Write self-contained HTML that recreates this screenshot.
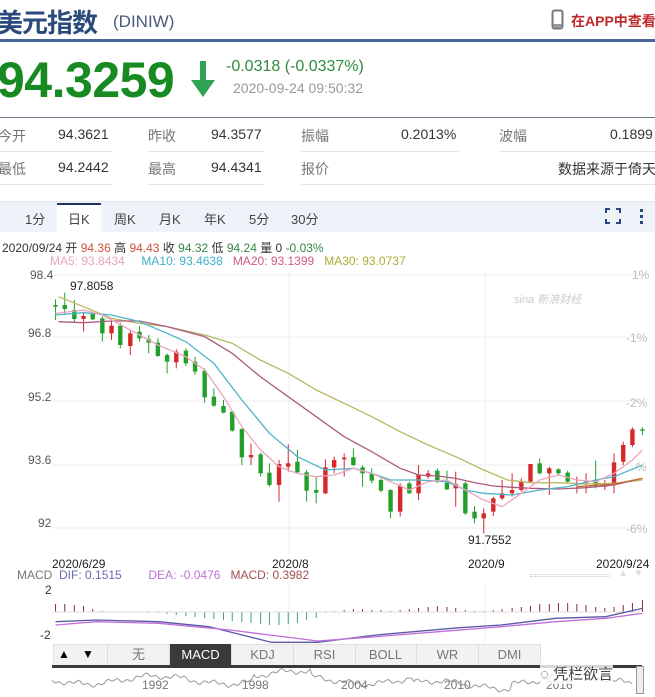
<!DOCTYPE html>
<html><head><meta charset="utf-8"><style>
*{margin:0;padding:0;box-sizing:border-box}
body{width:655px;height:697px;overflow:hidden;background:#fff;font-family:"Liberation Sans","Noto Sans CJK SC",sans-serif;position:relative;color:#333}
.a{position:absolute;white-space:nowrap}
.g{color:#777}
.ul{position:absolute;height:1px;background:#e4e4e4}
.bt{position:absolute;top:644px;width:62px;height:22px;border-right:1px solid #ddd;font-size:13px;color:#777;text-align:center;line-height:21px}
</style></head><body>
<div class="a" style="left:-3px;top:3px;font-size:26px;font-weight:bold;color:#2a4a7c;letter-spacing:-1px">美元指数</div>
<div class="a" style="left:113px;top:12px;font-size:17px;color:#4a5a78">(DINIW)</div>
<svg class="a" style="left:551px;top:9px" width="14" height="22"><rect x="1.5" y="1.5" width="10" height="18" rx="2" fill="none" stroke="#777" stroke-width="2"/><rect x="2" y="15" width="9" height="4" fill="#999"/></svg>
<div class="a" style="left:571px;top:11px;font-size:14px;font-weight:bold;color:#c0282a">在APP中查看</div>
<div class="a" style="left:0;top:39px;width:655px;height:3px;background:#46679a"></div>
<div class="a" style="left:-3px;top:51px;font-size:50px;font-weight:bold;color:#178a22;letter-spacing:-0.5px">94.3259</div>
<svg class="a" style="left:190px;top:60px" width="26" height="38"><rect x="10" y="1" width="6" height="24" fill="#2fa352"/><polygon points="1,20 25,20 13,37" fill="#2fa352"/></svg>
<div class="a" style="left:226px;top:58px;font-size:16px;color:#2f8a3e">-0.0318 (-0.0337%)</div>
<div class="a" style="left:233px;top:80px;font-size:14px;color:#999">2020-09-24 09:50:32</div>
<div class="a" style="left:0;top:117px;width:655px;height:1px;background:#6a7a88"></div>
<div class="a g" style="left:-2px;top:126px;font-size:14px">今开</div>
<div class="a" style="left:58px;top:126px;font-size:14px">94.3621</div>
<div class="a g" style="left:148px;top:126px;font-size:14px">昨收</div>
<div class="a" style="left:211px;top:126px;font-size:14px">94.3577</div>
<div class="a g" style="left:301px;top:126px;font-size:14px">振幅</div>
<div class="a" style="left:401px;top:126px;font-size:14px">0.2013%</div>
<div class="a g" style="left:499px;top:126px;font-size:14px">波幅</div>
<div class="a" style="left:610px;top:126px;font-size:14px">0.1899</div>
<div class="ul" style="left:0;top:151px;width:112px"></div><div class="ul" style="left:148px;top:151px;width:116px"></div><div class="ul" style="left:301px;top:151px;width:158px"></div><div class="ul" style="left:499px;top:151px;width:156px"></div>
<div class="a g" style="left:-2px;top:159px;font-size:14px">最低</div>
<div class="a" style="left:58px;top:159px;font-size:14px">94.2442</div>
<div class="a g" style="left:148px;top:159px;font-size:14px">最高</div>
<div class="a" style="left:211px;top:159px;font-size:14px">94.4341</div>
<div class="a g" style="left:301px;top:159px;font-size:14px">报价</div>
<div class="a" style="left:558px;top:159px;font-size:14px">数据来源于倚天</div>
<div class="ul" style="left:0;top:184px;width:112px"></div><div class="ul" style="left:148px;top:184px;width:116px"></div><div class="ul" style="left:301px;top:184px;width:354px"></div>
<div class="a" style="left:0;top:201px;width:655px;height:31px;background:#eef3fa;border-top:1px solid #e2e8f0"></div>
<div class="a" style="left:57px;top:203px;width:44px;height:29px;background:#fff;border-top:2px solid #1e3358"></div>
<div class="a" style="left:25px;top:209px;font-size:13px;color:#444">1分</div>
<div class="a" style="left:68px;top:209px;font-size:13px;color:#444">日K</div>
<div class="a" style="left:114px;top:209px;font-size:13px;color:#444">周K</div>
<div class="a" style="left:159px;top:209px;font-size:13px;color:#444">月K</div>
<div class="a" style="left:204px;top:209px;font-size:13px;color:#444">年K</div>
<div class="a" style="left:249px;top:209px;font-size:13px;color:#444">5分</div>
<div class="a" style="left:291px;top:209px;font-size:13px;color:#444">30分</div>
<svg class="a" style="left:605px;top:208px" width="45" height="16"><path d="M1 5V1h4M11 1h4v4M15 11v4h-4M5 15H1v-4" fill="none" stroke="#2a4a7c" stroke-width="2"/><rect x="35" y="1" width="3" height="3" fill="#2a4a7c"/><rect x="35" y="7" width="3" height="3" fill="#2a4a7c"/><rect x="35" y="13" width="3" height="3" fill="#2a4a7c"/></svg>
<div class="a" style="left:2px;top:239px;font-size:12px;color:#333">2020/09/24 开 <span style="color:#d0503a">94.36</span> 高 <span style="color:#d0503a">94.43</span> 收 <span style="color:#2f8a3e">94.32</span> 低 <span style="color:#2f8a3e">94.24</span> 量 0 <span style="color:#2f8a3e">-0.03%</span></div>
<div class="a" style="left:50px;top:254px;font-size:12px"><span style="color:#e8a4bd">MA5: 93.8434</span>&nbsp;&nbsp;&nbsp;&nbsp;&nbsp;<span style="color:#3bb0c8">MA10: 93.4638</span>&nbsp;&nbsp;&nbsp;<span style="color:#d05a88">MA20: 93.1399</span>&nbsp;&nbsp;&nbsp;<span style="color:#a8b030">MA30: 93.0737</span></div>
<svg id="ch" class="a" style="left:0;top:0" width="655" height="697"></svg>
<div class="a" style="left:30px;top:268px;font-size:12px;color:#555">98.4</div>
<div class="a" style="left:28px;top:326px;font-size:12px;color:#555">96.8</div>
<div class="a" style="left:28px;top:390px;font-size:12px;color:#555">95.2</div>
<div class="a" style="left:28px;top:453px;font-size:12px;color:#555">93.6</div>
<div class="a" style="left:38px;top:516px;font-size:12px;color:#555">92</div>
<div class="a" style="left:70px;top:279px;font-size:12px;color:#222">97.8058</div>
<div class="a" style="left:468px;top:533px;font-size:12px;color:#222">91.7552</div>
<div class="a" style="left:632px;top:268px;font-size:12px;color:#bbb">1%</div>
<div class="a" style="left:626px;top:331px;font-size:12px;color:#bbb">-1%</div>
<div class="a" style="left:626px;top:396px;font-size:12px;color:#bbb">-2%</div>
<div class="a" style="left:636px;top:460px;font-size:12px;color:#bbb">%</div>
<div class="a" style="left:626px;top:522px;font-size:12px;color:#bbb">-6%</div>
<div class="a" style="left:514px;top:291px;font-size:11px;color:#ccc;font-style:italic">sina 新浪财经</div>
<div class="a" style="left:52px;top:557px;font-size:12px;color:#222">2020/6/29</div>
<div class="a" style="left:272px;top:557px;font-size:12px;color:#222">2020/8</div>
<div class="a" style="left:468px;top:557px;font-size:12px;color:#222">2020/9</div>
<div class="a" style="left:596px;top:557px;font-size:12px;color:#222">2020/9/24</div>
<div class="a" style="left:17px;top:568px;font-size:12px"><span style="color:#777">MACD</span>&nbsp;&nbsp;<span style="color:#6a6ab0">DIF: 0.1515</span>&nbsp;&nbsp;&nbsp;&nbsp;&nbsp;&nbsp;&nbsp;&nbsp;<span style="color:#c070d0">DEA: -0.0476</span>&nbsp;&nbsp;&nbsp;<span style="color:#a05050">MACD: 0.3982</span></div>
<div class="a" style="left:530px;top:574px;width:80px;height:3px;border-top:1px dotted #ccc;border-bottom:1px dotted #ccc"></div>
<div class="a" style="left:618px;top:568px;font-size:10px;color:#ddd">▲&nbsp;&nbsp;▼</div>
<div class="a" style="left:45px;top:583px;font-size:12px;color:#333">2</div>
<div class="a" style="left:40px;top:628px;font-size:12px;color:#333">-2</div>
<div class="a" style="left:53px;top:644px;width:488px;height:22px;background:#f2f2f2;border:1px solid #e0e0e0"></div>
<div class="a" style="left:58px;top:647px;font-size:12px;color:#000">▲</div>
<div class="a" style="left:82px;top:647px;font-size:12px;color:#000">▼</div>
<div class="a" style="left:107px;top:644px;width:1px;height:22px;background:#ddd"></div>
<div class="bt" style="left:108px">无</div>
<div class="bt" style="left:170px;background:#3a3a3a;color:#fff">MACD</div>
<div class="bt" style="left:232px">KDJ</div>
<div class="bt" style="left:294px">RSI</div>
<div class="bt" style="left:355px">BOLL</div>
<div class="bt" style="left:417px">WR</div>
<div class="bt" style="left:479px">DMI</div>
<div class="a" style="left:52px;top:665px;width:590px;height:3px;background:#3a3a3a"></div>
<div class="a" style="left:142px;top:678px;font-size:12px;color:#777">1992</div>
<div class="a" style="left:242px;top:678px;font-size:12px;color:#777">1998</div>
<div class="a" style="left:341px;top:678px;font-size:12px;color:#777">2004</div>
<div class="a" style="left:444px;top:678px;font-size:12px;color:#777">2010</div>
<div class="a" style="left:546px;top:678px;font-size:12px;color:#777">2016</div>
<div class="a" style="left:540px;top:663px;font-size:15px;color:#444;background:rgba(255,255,255,.8)">◌ 凭栏欲言</div>
<div class="a" style="left:636px;top:666px;width:8px;height:28px;border:1px solid #999;background:#eee"></div>
<script>
var s=document.getElementById('ch'),h='';
function X(z){return z/2.394}function Y(z){return 260+z/3}
[275,337,401,465,528].forEach(function(y){h+='<line x1="52" x2="640" y1="'+y+'" y2="'+y+'" stroke="#eee"/>'});
[289,485].forEach(function(x){h+='<line x1="'+x+'" x2="'+x+'" y1="272" y2="555" stroke="#eee"/><line x1="'+x+'" x2="'+x+'" y1="585" y2="643" stroke="#eee"/>'});
var d="133 g 135 140 118 180|155 g 135 147 98 165|178 g 150 177 120 188|200 r 168 177 155 215|222 g 160 178 155 180|245 g 175 220 168 245|267 r 197 220 180 240|288 g 197 255 188 265|312 r 220 258 210 285|334 g 215 235 198 245|356 g 237 248 225 280|378 g 248 288 235 290|400 g 285 305 280 340|422 r 275 307 268 325|445 g 272 310 265 318|467 g 305 335 290 345|490 g 332 412 325 428|512 g 410 437 385 440|535 g 438 458 420 460|556 g 455 512 452 515|579 g 507 592 505 615|601 r 585 592 550 615|624 g 583 640 578 650|645 g 638 675 610 680|668 r 612 675 600 725|690 r 610 620 553 635|712 g 605 637 570 642|734 g 637 692 630 725|757 g 690 698 650 730|779 r 622 700 598 702|800 r 600 622 590 640|824 r 593 598 580 650|846 g 592 615 565 618|868 g 622 640 615 680|890 g 640 662 625 670|912 g 660 692 655 697|935 g 690 755 688 775|958 r 677 755 670 770|980 g 670 700 665 702|1002 r 645 700 615 720|1025 r 640 650 630 655|1047 g 632 665 625 670|1070 g 668 688 632 690|1091 r 672 685 635 740|1114 g 670 760 665 765|1136 g 755 775 738 790|1158 r 760 775 745 820|1181 r 715 755 710 768|1202 r 700 715 660 720|1226 r 690 700 640 710|1248 r 665 690 655 695|1270 r 612 665 612 668|1292 g 610 640 595 643|1315 r 625 640 620 705|1337 g 628 640 625 648|1359 g 638 665 632 670|1381 r 670 672 650 700|1403 r 665 668 640 700|1426 g 660 680 602 685|1448 r 672 680 660 690|1470 r 607 675 580 700|1492 r 555 605 545 615|1514 r 508 555 502 562|1538 g 508 512 502 525";
var xs=[];
d.split('|').forEach(function(r){var p=r.split(' '),x=X(+p[0]),c=p[1]=='g'?'#23a02c':'#d6282a';xs.push(x);
var t=Y(+p[2]),b=Y(+p[3]);if(b-t<1.2)b=t+1.2;
h+='<line x1="'+x+'" x2="'+x+'" y1="'+Y(+p[4])+'" y2="'+Y(+p[5])+'" stroke="'+c+'"/><rect x="'+(x-2.2)+'" y="'+t+'" width="4.4" height="'+(b-t)+'" fill="'+c+'"/>';});
function L(str,c,oy){var pts=str.split(' ').reduce(function(a,v,i,arr){if(i%2==0)a.push(X(+v)+','+(oy+ +arr[i+1]/3));return a},[]);h+='<polyline points="'+pts.join(' ')+'" fill="none" stroke="'+c+'" stroke-width="1.3"/>';}
L("140 110 200 140 267 175 334 190 400 200 490 225 556 250 623 300 690 340 757 390 824 430 890 470 958 515 1025 555 1091 590 1158 630 1215 660 1270 668 1337 668 1403 672 1470 670 1538 660","#b8b860",260);
L("140 185 200 188 267 183 334 183 400 200 490 230 556 280 623 350 690 410 757 470 824 530 890 575 958 625 1002 645 1047 648 1091 655 1136 668 1181 678 1226 682 1270 685 1337 687 1403 683 1470 675 1538 655","#b05a80",260);
L("133 165 200 158 267 165 334 185 400 220 445 245 512 310 579 420 645 520 712 590 779 630 846 625 890 640 935 660 1002 660 1070 665 1114 690 1158 700 1226 705 1292 690 1359 680 1426 660 1470 650 1538 615","#4bb5c8",260);
L("133 160 200 150 245 165 312 210 378 255 445 290 490 330 535 410 579 500 624 570 668 620 712 640 757 650 800 645 846 625 890 640 935 665 980 690 1025 665 1070 660 1114 690 1158 720 1202 740 1248 700 1292 660 1337 645 1381 660 1426 665 1470 640 1514 600 1538 570","#eaa6bf",260);
L("1381 680 1470 672 1538 655","#c07030",260);
var zero=612,hv=[8,8,7,6,3,1,0,0,0,0,-1,-1,-2,-3,-4,-5,-6,-7,-8,-9,-10,-11,-12,-13,-13,-12,-11,-8,-6,-1,1,2,3,3,2,2,1,2,3,4,5,6,5,4,2,1,1,2,3,4,5,6,8,8,9,9,8,7,5,4,5,7,9,12];
xs.forEach(function(x,i){var v=hv[i]||0;if(!v)return;h+='<line x1="'+x+'" x2="'+x+'" y1="'+zero+'" y2="'+(zero-v)+'" stroke="'+(v>0?'#8a2a2a':'#3aa07a')+'"/>';});
h+='<line x1="52" x2="640" y1="612" y2="612" stroke="#ddd"/>';
L("133 200 230 195 380 200 500 215 650 262 760 262 900 240 1100 218 1200 210 1330 190 1450 185 1538 160","#5a5aa8",555);
L("133 210 230 200 380 205 550 225 760 258 900 245 1050 230 1200 215 1330 200 1450 190 1538 175","#c070d8",555);
var m='';for(var i=0;i<=290;i++){var x=52+i*2;var y=680+Math.sin(i*0.09)*4+Math.sin(i*0.37)*2+Math.sin(i*1.3)*1.5+(i>100&&i<130?-5:0)+(i>180&&i<230?5:0);m+=x+','+y.toFixed(1)+' ';}
h+='<polyline points="'+m+'" fill="none" stroke="#999" stroke-width="1"/>';
s.innerHTML=h;
</script>
</body></html>
